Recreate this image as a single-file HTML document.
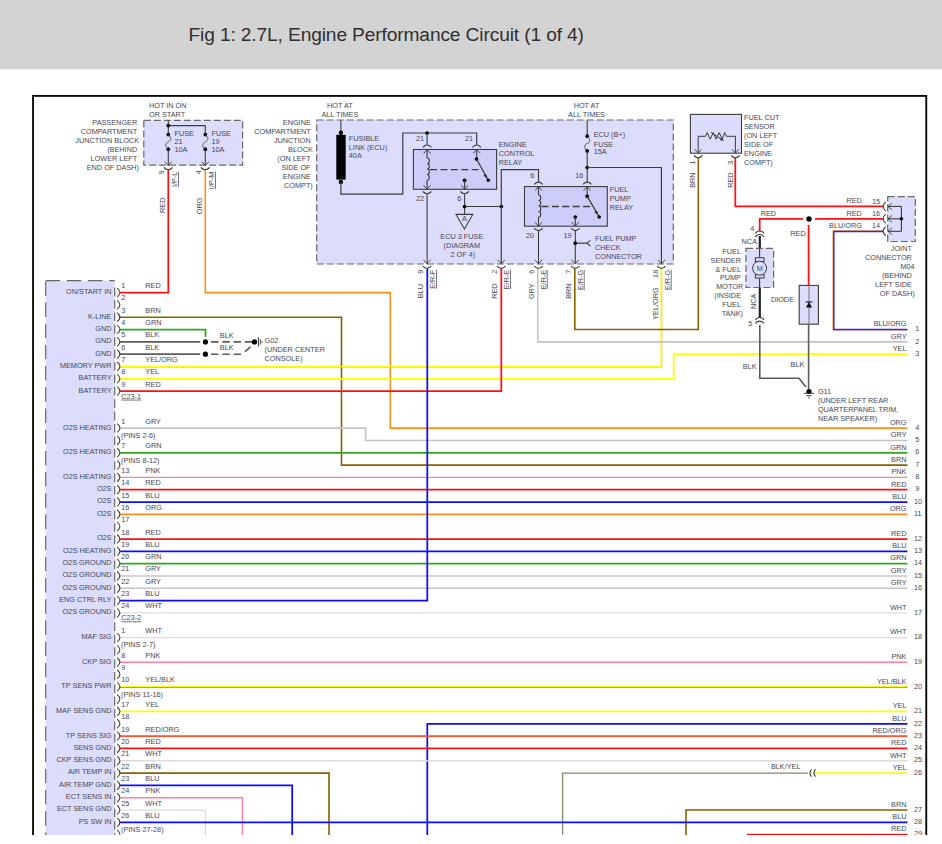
<!DOCTYPE html>
<html><head><meta charset="utf-8"><title>Fig 1: 2.7L, Engine Performance Circuit (1 of 4)</title>
<style>
html,body{margin:0;padding:0;background:#fff;}
body{width:942px;height:844px;overflow:hidden;position:relative;font-family:"Liberation Sans",sans-serif;}
#hdr{position:absolute;left:0;top:0;width:942px;height:69px;background:#d3d3d3;}
#ttl{position:absolute;left:188.5px;top:23.5px;font-size:19.2px;line-height:22px;color:#303030;white-space:nowrap;letter-spacing:-0.14px;}
#dia{position:absolute;left:0;top:0;width:942px;height:835px;overflow:hidden;}
svg text{font-family:"Liberation Sans",sans-serif;font-size:7.3px;fill:#474756;}
</style></head><body>
<div id="hdr"><div id="ttl">Fig 1: 2.7L, Engine Performance Circuit (1 of 4)</div></div>
<div id="dia"><svg width="942" height="835" viewBox="0 0 942 835" style="position:absolute;left:0;top:0">
<rect x="0" y="68" width="942" height="1.3" fill="#d3d3d3"/>
<rect x="33.05" y="95.9" width="893.2" height="800" fill="none" stroke="#0a0a0a" stroke-width="1.9"/>
<rect x="45.7" y="280.7" width="69.0" height="600" fill="#dcdcfd"/>
<path d="M45.7 281.3 L45.7 900 M45.7 280.7 L114.7 280.7" stroke="#686868" stroke-width="1.2" fill="none" stroke-dasharray="14.4 6.8"/>
<path d="M120 292.6 L168.3 292.6 L168.3 169.5" stroke="#ff1010" stroke-width="1.75" fill="none" />
<path d="M205.3 169.5 L205.3 292.6 L390.3 292.6 L390.3 428.12 L907.4 428.12" stroke="#ff8c1a" stroke-width="1.55" fill="none" />
<path d="M120 317.24 L341.5 317.24 L341.5 465.08 L907.4 465.08" stroke="#866200" stroke-width="1.6" fill="none" />
<path d="M120 366.82 L661.6 366.82 L661.6 268.2" stroke="#ffb400" stroke-width="1.35" fill="none" />
<path d="M120 366.42 L661.2 366.42 L661.2 268.2" stroke="#ffff00" stroke-width="1.25" fill="none" />
<path d="M120 378.84 L673.7 378.84 L673.7 354.2 L907.4 354.2" stroke="#ffff00" stroke-width="1.75" fill="none" />
<path d="M120 391.16 L501.3 391.16 L501.3 268.2" stroke="#ff1010" stroke-width="1.75" fill="none" />
<path d="M537.8 268.2 L537.8 341.88 L907.4 341.88" stroke="#c4c4c4" stroke-width="1.6" fill="none" />
<path d="M574.8 268.2 L574.8 329.56 L698.3 329.56 L698.3 157.6" stroke="#866200" stroke-width="1.6" fill="none" />
<path d="M120 428.12 L365.6 428.12 L365.6 440.44 L907.4 440.44" stroke="#c4c4c4" stroke-width="1.6" fill="none" />
<path d="M120 452.76 L907.4 452.76" stroke="#2fa81f" stroke-width="1.75" fill="none" />
<path d="M120 477.4 L907.4 477.4" stroke="#ff7f9c" stroke-width="1.35" fill="none" />
<path d="M120 489.72 L907.4 489.72" stroke="#ff1010" stroke-width="1.75" fill="none" />
<path d="M120 502.04 L907.4 502.04" stroke="#0c0cff" stroke-width="1.75" fill="none" />
<path d="M120 514.36 L907.4 514.36" stroke="#ff8c1a" stroke-width="1.55" fill="none" />
<path d="M120 539 L907.4 539" stroke="#ff1010" stroke-width="1.75" fill="none" />
<path d="M120 551.32 L907.4 551.32" stroke="#0c0cff" stroke-width="1.75" fill="none" />
<path d="M120 563.64 L907.4 563.64" stroke="#2fa81f" stroke-width="1.75" fill="none" />
<path d="M120 575.96 L907.4 575.96" stroke="#c4c4c4" stroke-width="1.6" fill="none" />
<path d="M120 588.28 L907.4 588.28" stroke="#c4c4c4" stroke-width="1.6" fill="none" />
<path d="M120 600.6 L427.3 600.6 L427.3 268.2" stroke="#0c0cff" stroke-width="1.75" fill="none" />
<path d="M120 612.92 L907.4 612.92" stroke="#dcdcdc" stroke-width="1.3" fill="none" />
<path d="M120 637.56 L907.4 637.56" stroke="#dcdcdc" stroke-width="1.3" fill="none" />
<path d="M120 662.2 L907.4 662.2" stroke="#ff7f9c" stroke-width="1.35" fill="none" />
<path d="M120 687.14 L907.4 687.14" stroke="#8a8a30" stroke-width="1.75" fill="none" />
<path d="M120 686.54 L907.4 686.54" stroke="#ffff00" stroke-width="1.3" fill="none" />
<path d="M120 711.48 L907.4 711.48" stroke="#ffff00" stroke-width="1.75" fill="none" />
<path d="M427.3 900 L427.3 723.8 L907.4 723.8" stroke="#0c0cff" stroke-width="1.75" fill="none" />
<path d="M120 736.12 L907.4 736.12" stroke="#ff5030" stroke-width="1.75" fill="none" />
<path d="M120 748.44 L907.4 748.44" stroke="#ff1010" stroke-width="1.75" fill="none" />
<path d="M120 760.76 L907.4 760.76" stroke="#dcdcdc" stroke-width="1.3" fill="none" />
<path d="M120 773.08 L329 773.08 L329 900" stroke="#866200" stroke-width="1.6" fill="none" />
<path d="M562.6 900 L562.6 773.08 L808 773.08" stroke="#85856a" stroke-width="1.3" fill="none" />
<path d="M120 785.4 L292.2 785.4 L292.2 900" stroke="#0c0cff" stroke-width="1.75" fill="none" />
<path d="M120 797.72 L242.4 797.72 L242.4 900" stroke="#ff7f9c" stroke-width="1.35" fill="none" />
<path d="M120 810.04 L205.4 810.04 L205.4 900" stroke="#dcdcdc" stroke-width="1.3" fill="none" />
<path d="M686 900 L686 810.04 L907.4 810.04" stroke="#866200" stroke-width="1.6" fill="none" />
<path d="M120 822.36 L907.4 822.36" stroke="#0c0cff" stroke-width="1.75" fill="none" />
<path d="M120 329.56 L205.5 329.56 L205.5 341.88" stroke="#2fa81f" stroke-width="1.75" fill="none" />
<path d="M120 341.88 L205.5 341.88" stroke="#5c5c5c" stroke-width="1.75" fill="none" />
<path d="M120 354.2 L205.5 354.2" stroke="#5c5c5c" stroke-width="1.75" fill="none" />
<path d="M211 341.88 L252 341.88" stroke="#5c5c5c" stroke-width="1.6" fill="none" stroke-dasharray="7.5 3.8"/>
<path d="M211 354.2 L242 354.2" stroke="#5c5c5c" stroke-width="1.6" fill="none" stroke-dasharray="7.5 3.8"/>
<path d="M245 351.6 L250.6 346.8" stroke="#5c5c5c" stroke-width="1.6" fill="none" />
<path d="M814 773.08 L907.4 773.08" stroke="#ffff00" stroke-width="1.75" fill="none" />
<path d="M811.5 769.48 Q808.3 773.08 811.5 776.6800000000001 M815.5 769.48 Q812.3 773.08 815.5 776.6800000000001" stroke="#3c3c3c" stroke-width="1.1" fill="none"/>
<path d="M747 834.68 L907.4 834.68" stroke="#ff1010" stroke-width="1.75" fill="none" />
<path d="M735.3 157.6 L735.3 206.4 L883 206.4" stroke="#ff1010" stroke-width="1.75" fill="none" />
<path d="M759.7 231 L759.7 218.9 L883 218.9" stroke="#ff1010" stroke-width="1.75" fill="none" />
<path d="M808.6 218.8 L808.6 285" stroke="#ff1010" stroke-width="1.75" fill="none" />
<path d="M883 231 L833.2 231 L833.2 329.86 L907.4 329.86" stroke="#ff9a3a" stroke-width="1.5" fill="none" />
<path d="M883 231.4 L833.8 231.4 L833.8 329.46 L907.4 329.46" stroke="#2828f0" stroke-width="1.45" fill="none" />
<path d="M759.8 236 L759.8 318" stroke="#222" stroke-width="2.2" fill="none" />
<path d="M759.8 325 L759.8 378.3 L799 378.3 L806 387" stroke="#5c5c5c" stroke-width="1.6" fill="none" />
<path d="M808.6 324.6 L808.6 389" stroke="#5c5c5c" stroke-width="1.6" fill="none" />
<path d="M114.7 287.6 L114.7 900" stroke="#686868" stroke-width="1.2" fill="none" stroke-dasharray="8.6 3.8"/>
<path d="M117.2 288.1 Q122.6 292.5 117.2 296.9" stroke="#3c3c3c" stroke-width="1.1" fill="none"/>
<path d="M117.2 300.42 Q122.6 304.82 117.2 309.22" stroke="#3c3c3c" stroke-width="1.1" fill="none"/>
<path d="M117.2 312.74 Q122.6 317.14 117.2 321.54" stroke="#3c3c3c" stroke-width="1.1" fill="none"/>
<path d="M117.2 325.06 Q122.6 329.46 117.2 333.86" stroke="#3c3c3c" stroke-width="1.1" fill="none"/>
<path d="M117.2 337.38 Q122.6 341.78 117.2 346.18" stroke="#3c3c3c" stroke-width="1.1" fill="none"/>
<path d="M117.2 349.7 Q122.6 354.1 117.2 358.5" stroke="#3c3c3c" stroke-width="1.1" fill="none"/>
<path d="M117.2 362.02 Q122.6 366.42 117.2 370.82" stroke="#3c3c3c" stroke-width="1.1" fill="none"/>
<path d="M117.2 374.34 Q122.6 378.74 117.2 383.14" stroke="#3c3c3c" stroke-width="1.1" fill="none"/>
<path d="M117.2 386.66 Q122.6 391.06 117.2 395.46" stroke="#3c3c3c" stroke-width="1.1" fill="none"/>
<path d="M117.2 423.62 Q122.6 428.02 117.2 432.42" stroke="#3c3c3c" stroke-width="1.1" fill="none"/>
<path d="M117.2 435.94 Q122.6 440.34 117.2 444.74" stroke="#3c3c3c" stroke-width="1.1" fill="none"/>
<path d="M117.2 448.26 Q122.6 452.66 117.2 457.06" stroke="#3c3c3c" stroke-width="1.1" fill="none"/>
<path d="M117.2 460.58 Q122.6 464.98 117.2 469.38" stroke="#3c3c3c" stroke-width="1.1" fill="none"/>
<path d="M117.2 472.9 Q122.6 477.3 117.2 481.7" stroke="#3c3c3c" stroke-width="1.1" fill="none"/>
<path d="M117.2 485.22 Q122.6 489.62 117.2 494.02" stroke="#3c3c3c" stroke-width="1.1" fill="none"/>
<path d="M117.2 497.54 Q122.6 501.94 117.2 506.34" stroke="#3c3c3c" stroke-width="1.1" fill="none"/>
<path d="M117.2 509.86 Q122.6 514.26 117.2 518.66" stroke="#3c3c3c" stroke-width="1.1" fill="none"/>
<path d="M117.2 522.18 Q122.6 526.58 117.2 530.98" stroke="#3c3c3c" stroke-width="1.1" fill="none"/>
<path d="M117.2 534.5 Q122.6 538.9 117.2 543.3" stroke="#3c3c3c" stroke-width="1.1" fill="none"/>
<path d="M117.2 546.82 Q122.6 551.22 117.2 555.62" stroke="#3c3c3c" stroke-width="1.1" fill="none"/>
<path d="M117.2 559.14 Q122.6 563.54 117.2 567.94" stroke="#3c3c3c" stroke-width="1.1" fill="none"/>
<path d="M117.2 571.46 Q122.6 575.86 117.2 580.26" stroke="#3c3c3c" stroke-width="1.1" fill="none"/>
<path d="M117.2 583.78 Q122.6 588.18 117.2 592.58" stroke="#3c3c3c" stroke-width="1.1" fill="none"/>
<path d="M117.2 596.1 Q122.6 600.5 117.2 604.9" stroke="#3c3c3c" stroke-width="1.1" fill="none"/>
<path d="M117.2 608.42 Q122.6 612.82 117.2 617.22" stroke="#3c3c3c" stroke-width="1.1" fill="none"/>
<path d="M117.2 633.06 Q122.6 637.46 117.2 641.86" stroke="#3c3c3c" stroke-width="1.1" fill="none"/>
<path d="M117.2 645.38 Q122.6 649.78 117.2 654.18" stroke="#3c3c3c" stroke-width="1.1" fill="none"/>
<path d="M117.2 657.7 Q122.6 662.1 117.2 666.5" stroke="#3c3c3c" stroke-width="1.1" fill="none"/>
<path d="M117.2 670.02 Q122.6 674.42 117.2 678.82" stroke="#3c3c3c" stroke-width="1.1" fill="none"/>
<path d="M117.2 682.34 Q122.6 686.74 117.2 691.14" stroke="#3c3c3c" stroke-width="1.1" fill="none"/>
<path d="M117.2 694.66 Q122.6 699.06 117.2 703.46" stroke="#3c3c3c" stroke-width="1.1" fill="none"/>
<path d="M117.2 706.98 Q122.6 711.38 117.2 715.78" stroke="#3c3c3c" stroke-width="1.1" fill="none"/>
<path d="M117.2 719.3 Q122.6 723.7 117.2 728.1" stroke="#3c3c3c" stroke-width="1.1" fill="none"/>
<path d="M117.2 731.62 Q122.6 736.02 117.2 740.42" stroke="#3c3c3c" stroke-width="1.1" fill="none"/>
<path d="M117.2 743.94 Q122.6 748.34 117.2 752.74" stroke="#3c3c3c" stroke-width="1.1" fill="none"/>
<path d="M117.2 756.26 Q122.6 760.66 117.2 765.06" stroke="#3c3c3c" stroke-width="1.1" fill="none"/>
<path d="M117.2 768.58 Q122.6 772.98 117.2 777.38" stroke="#3c3c3c" stroke-width="1.1" fill="none"/>
<path d="M117.2 780.9 Q122.6 785.3 117.2 789.7" stroke="#3c3c3c" stroke-width="1.1" fill="none"/>
<path d="M117.2 793.22 Q122.6 797.62 117.2 802.02" stroke="#3c3c3c" stroke-width="1.1" fill="none"/>
<path d="M117.2 805.54 Q122.6 809.94 117.2 814.34" stroke="#3c3c3c" stroke-width="1.1" fill="none"/>
<path d="M117.2 817.86 Q122.6 822.26 117.2 826.66" stroke="#3c3c3c" stroke-width="1.1" fill="none"/>
<path d="M117.2 830.18 Q122.6 834.58 117.2 838.98" stroke="#3c3c3c" stroke-width="1.1" fill="none"/>
<path d="M117.2 842.5 Q122.6 846.9 117.2 851.3" stroke="#3c3c3c" stroke-width="1.1" fill="none"/>
<text x="111.5" y="294" text-anchor="end">ON/START IN</text>
<text x="111.5" y="318.64" text-anchor="end">K-LINE</text>
<text x="111.5" y="330.96" text-anchor="end">GND</text>
<text x="111.5" y="343.28" text-anchor="end">GND</text>
<text x="111.5" y="355.6" text-anchor="end">GND</text>
<text x="111.5" y="367.92" text-anchor="end">MEMORY PWR</text>
<text x="111.5" y="380.24" text-anchor="end">BATTERY</text>
<text x="111.5" y="392.56" text-anchor="end">BATTERY</text>
<text x="111.5" y="429.52" text-anchor="end">O2S HEATING</text>
<text x="111.5" y="454.16" text-anchor="end">O2S HEATING</text>
<text x="111.5" y="478.8" text-anchor="end">O2S HEATING</text>
<text x="111.5" y="491.12" text-anchor="end">O2S</text>
<text x="111.5" y="503.44" text-anchor="end">O2S</text>
<text x="111.5" y="515.76" text-anchor="end">O2S</text>
<text x="111.5" y="540.4" text-anchor="end">O2S</text>
<text x="111.5" y="552.72" text-anchor="end">O2S HEATING</text>
<text x="111.5" y="565.04" text-anchor="end">O2S GROUND</text>
<text x="111.5" y="577.36" text-anchor="end">O2S GROUND</text>
<text x="111.5" y="589.68" text-anchor="end">O2S GROUND</text>
<text x="111.5" y="602" text-anchor="end">ENG CTRL RLY</text>
<text x="111.5" y="614.32" text-anchor="end">O2S GROUND</text>
<text x="111.5" y="638.96" text-anchor="end">MAF SIG</text>
<text x="111.5" y="663.6" text-anchor="end">CKP SIG</text>
<text x="111.5" y="688.24" text-anchor="end">TP SENS PWR</text>
<text x="111.5" y="712.88" text-anchor="end">MAF SENS GND</text>
<text x="111.5" y="737.52" text-anchor="end">TP SENS SIG</text>
<text x="111.5" y="749.84" text-anchor="end">SENS GND</text>
<text x="111.5" y="762.16" text-anchor="end">CKP SENS GND</text>
<text x="111.5" y="774.48" text-anchor="end">AIR TEMP IN</text>
<text x="111.5" y="786.8" text-anchor="end">AIR TEMP GND</text>
<text x="111.5" y="799.12" text-anchor="end">ECT SENS IN</text>
<text x="111.5" y="811.44" text-anchor="end">ECT SENS GND</text>
<text x="111.5" y="823.76" text-anchor="end">PS SW IN</text>
<text x="121.3" y="288.1">1</text>
<text x="145.3" y="288.1">RED</text>
<text x="121.3" y="300.42">2</text>
<text x="121.3" y="312.74">3</text>
<text x="145.3" y="312.74">BRN</text>
<text x="121.3" y="325.06">4</text>
<text x="145.3" y="325.06">GRN</text>
<text x="121.3" y="337.38">5</text>
<text x="145.3" y="337.38">BLK</text>
<text x="121.3" y="349.7">6</text>
<text x="145.3" y="349.7">BLK</text>
<text x="121.3" y="362.02">7</text>
<text x="145.3" y="362.02">YEL/ORG</text>
<text x="121.3" y="374.34">8</text>
<text x="145.3" y="374.34">YEL</text>
<text x="121.3" y="386.66">9</text>
<text x="145.3" y="386.66">RED</text>
<text x="121.3" y="423.62">1</text>
<text x="145.3" y="423.62">GRY</text>
<text x="121.3" y="448.26">7</text>
<text x="145.3" y="448.26">GRN</text>
<text x="121.3" y="472.9">13</text>
<text x="145.3" y="472.9">PNK</text>
<text x="121.3" y="485.22">14</text>
<text x="145.3" y="485.22">RED</text>
<text x="121.3" y="497.54">15</text>
<text x="145.3" y="497.54">BLU</text>
<text x="121.3" y="509.86">16</text>
<text x="145.3" y="509.86">ORG</text>
<text x="121.3" y="522.18">17</text>
<text x="121.3" y="534.5">18</text>
<text x="145.3" y="534.5">RED</text>
<text x="121.3" y="546.82">19</text>
<text x="145.3" y="546.82">BLU</text>
<text x="121.3" y="559.14">20</text>
<text x="145.3" y="559.14">GRN</text>
<text x="121.3" y="571.46">21</text>
<text x="145.3" y="571.46">GRY</text>
<text x="121.3" y="583.78">22</text>
<text x="145.3" y="583.78">GRY</text>
<text x="121.3" y="596.1">23</text>
<text x="145.3" y="596.1">BLU</text>
<text x="121.3" y="608.42">24</text>
<text x="145.3" y="608.42">WHT</text>
<text x="121.3" y="633.06">1</text>
<text x="145.3" y="633.06">WHT</text>
<text x="121.3" y="657.7">8</text>
<text x="145.3" y="657.7">PNK</text>
<text x="121.3" y="670.02">9</text>
<text x="121.3" y="682.34">10</text>
<text x="145.3" y="682.34">YEL/BLK</text>
<text x="121.3" y="706.98">17</text>
<text x="145.3" y="706.98">YEL</text>
<text x="121.3" y="719.3">18</text>
<text x="121.3" y="731.62">19</text>
<text x="145.3" y="731.62">RED/ORG</text>
<text x="121.3" y="743.94">20</text>
<text x="145.3" y="743.94">RED</text>
<text x="121.3" y="756.26">21</text>
<text x="145.3" y="756.26">WHT</text>
<text x="121.3" y="768.58">22</text>
<text x="145.3" y="768.58">BRN</text>
<text x="121.3" y="780.9">23</text>
<text x="145.3" y="780.9">BLU</text>
<text x="121.3" y="793.22">24</text>
<text x="145.3" y="793.22">PNK</text>
<text x="121.3" y="805.54">25</text>
<text x="145.3" y="805.54">WHT</text>
<text x="121.3" y="817.86">26</text>
<text x="145.3" y="817.86">BLU</text>
<text x="121" y="438.04">(PINS 2-6)</text>
<text x="121" y="462.68">(PINS 8-12)</text>
<text x="121" y="647.48">(PINS 2-7)</text>
<text x="121" y="696.76">(PINS 11-16)</text>
<text x="121" y="832.28">(PINS 27-28)</text>
<text x="121.3" y="398.68" text-decoration="underline">C23-1</text>
<text x="121.3" y="620.44" text-decoration="underline">C23-2</text>
<text x="906.5" y="326.36" text-anchor="end">BLU/ORG</text>
<text x="915.2" y="331.26">1</text>
<text x="906.5" y="338.68" text-anchor="end">GRY</text>
<text x="915.2" y="343.58">2</text>
<text x="906.5" y="351" text-anchor="end">YEL</text>
<text x="915.2" y="355.9">3</text>
<text x="906.5" y="424.92" text-anchor="end">ORG</text>
<text x="915.2" y="429.82">4</text>
<text x="906.5" y="437.24" text-anchor="end">GRY</text>
<text x="915.2" y="442.14">5</text>
<text x="906.5" y="449.56" text-anchor="end">GRN</text>
<text x="915.2" y="454.46">6</text>
<text x="906.5" y="461.88" text-anchor="end">BRN</text>
<text x="915.2" y="466.78">7</text>
<text x="906.5" y="474.2" text-anchor="end">PNK</text>
<text x="915.2" y="479.1">8</text>
<text x="906.5" y="486.52" text-anchor="end">RED</text>
<text x="915.2" y="491.42">9</text>
<text x="906.5" y="498.84" text-anchor="end">BLU</text>
<text x="914" y="503.74">10</text>
<text x="906.5" y="511.16" text-anchor="end">ORG</text>
<text x="914" y="516.06">11</text>
<text x="906.5" y="535.8" text-anchor="end">RED</text>
<text x="914" y="540.7">12</text>
<text x="906.5" y="548.12" text-anchor="end">BLU</text>
<text x="914" y="553.02">13</text>
<text x="906.5" y="560.44" text-anchor="end">GRN</text>
<text x="914" y="565.34">14</text>
<text x="906.5" y="572.76" text-anchor="end">GRY</text>
<text x="914" y="577.66">15</text>
<text x="906.5" y="585.08" text-anchor="end">GRY</text>
<text x="914" y="589.98">16</text>
<text x="906.5" y="609.72" text-anchor="end">WHT</text>
<text x="914" y="614.62">17</text>
<text x="906.5" y="634.36" text-anchor="end">WHT</text>
<text x="914" y="639.26">18</text>
<text x="906.5" y="659" text-anchor="end">PNK</text>
<text x="914" y="663.9">19</text>
<text x="906.5" y="683.64" text-anchor="end">YEL/BLK</text>
<text x="914" y="688.54">20</text>
<text x="906.5" y="708.28" text-anchor="end">YEL</text>
<text x="914" y="713.18">21</text>
<text x="906.5" y="720.6" text-anchor="end">BLU</text>
<text x="914" y="725.5">22</text>
<text x="906.5" y="732.92" text-anchor="end">RED/ORG</text>
<text x="914" y="737.82">23</text>
<text x="906.5" y="745.24" text-anchor="end">RED</text>
<text x="914" y="750.14">24</text>
<text x="906.5" y="757.56" text-anchor="end">WHT</text>
<text x="914" y="762.46">25</text>
<text x="906.5" y="769.88" text-anchor="end">YEL</text>
<text x="914" y="774.78">26</text>
<text x="906.5" y="806.84" text-anchor="end">BRN</text>
<text x="914" y="811.74">27</text>
<text x="906.5" y="819.16" text-anchor="end">BLU</text>
<text x="914" y="824.06">28</text>
<text x="906.5" y="831.48" text-anchor="end">RED</text>
<text x="914" y="836.38">29</text>
<text x="800.5" y="769.28" text-anchor="end">BLK/YEL</text>
<rect x="143.8" y="120.4" width="98.8" height="44.8" fill="#dcdcfd" stroke="#686868" stroke-width="1.2" stroke-dasharray="7 3"/>
<text x="149" y="108">HOT IN ON</text>
<text x="149" y="116.7">OR START</text>
<text x="137.2" y="124.9" text-anchor="end">PASSENGER</text>
<text x="137.2" y="133.86" text-anchor="end">COMPARTMENT</text>
<text x="139" y="142.82" text-anchor="end">JUNCTION BLOCK</text>
<text x="137.2" y="151.78" text-anchor="end">(BEHIND</text>
<text x="137.2" y="160.74" text-anchor="end">LOWER LEFT</text>
<text x="139" y="169.7" text-anchor="end">END OF DASH)</text>
<line x1="168.3" y1="120.4" x2="168.3" y2="134.6" stroke="#3c3c3c" stroke-width="1.1" />
<line x1="168.3" y1="149.2" x2="168.3" y2="165" stroke="#3c3c3c" stroke-width="1.1" />
<line x1="168.3" y1="125.6" x2="205.3" y2="125.6" stroke="#3c3c3c" stroke-width="1.1" />
<line x1="205.3" y1="125.6" x2="205.3" y2="134.6" stroke="#3c3c3c" stroke-width="1.1" />
<line x1="205.3" y1="149.2" x2="205.3" y2="165" stroke="#3c3c3c" stroke-width="1.1" />
<circle cx="168.3" cy="125.6" r="1.85" fill="#000"/>
<circle cx="168.3" cy="134.6" r="1.85" fill="#000"/>
<circle cx="168.3" cy="149.2" r="1.85" fill="#000"/>
<path d="M168.3 134.6 C171.70000000000002 137 171.70000000000002 140 168.3 141.9 C164.9 143.8 164.9 146.8 168.3 149.2" stroke="#555" stroke-width="1.0" fill="none"/>
<path d="M164.8 161.6 L168.3 165.6 L171.8 161.6" stroke="#3c3c3c" stroke-width="0.9" fill="none"/>
<path d="M164 167.5 Q168.3 171.9 172.6 167.5" stroke="#3c3c3c" stroke-width="1.1" fill="none"/>
<circle cx="205.3" cy="134.6" r="1.85" fill="#000"/>
<circle cx="205.3" cy="149.2" r="1.85" fill="#000"/>
<path d="M205.3 134.6 C208.70000000000002 137 208.70000000000002 140 205.3 141.9 C201.9 143.8 201.9 146.8 205.3 149.2" stroke="#555" stroke-width="1.0" fill="none"/>
<path d="M201.8 161.6 L205.3 165.6 L208.8 161.6" stroke="#3c3c3c" stroke-width="0.9" fill="none"/>
<path d="M201 167.5 Q205.3 171.9 209.6 167.5" stroke="#3c3c3c" stroke-width="1.1" fill="none"/>
<text x="174.5" y="135.6">FUSE</text>
<text x="174.5" y="143.6">21</text>
<text x="174.5" y="151.6">10A</text>
<text x="211.5" y="135.6">FUSE</text>
<text x="211.5" y="143.6">19</text>
<text x="211.5" y="151.6">10A</text>
<text transform="translate(164.2 170.5) rotate(-90)" text-anchor="end">9</text>
<text transform="translate(201.2 170.5) rotate(-90)" text-anchor="end">4</text>
<text transform="translate(177.2 171.7) rotate(-90)" text-anchor="end" text-decoration="underline">I/P-L</text>
<text transform="translate(214.2 171.7) rotate(-90)" text-anchor="end" text-decoration="underline">I/P-M</text>
<text transform="translate(164.8 197.5) rotate(-90)" text-anchor="end">RED</text>
<text transform="translate(201.8 197.5) rotate(-90)" text-anchor="end">ORG</text>
<rect x="316.7" y="120" width="356.6" height="144" fill="#dcdcfd" stroke="#686868" stroke-width="1.2" stroke-dasharray="7 3"/>
<text x="339.9" y="107.8" text-anchor="middle">HOT AT</text>
<text x="339.9" y="116.8" text-anchor="middle">ALL TIMES</text>
<text x="310.8" y="124.9" text-anchor="end">ENGINE</text>
<text x="310.8" y="133.91" text-anchor="end">COMPARTMENT</text>
<text x="310.8" y="142.92" text-anchor="end">JUNCTION</text>
<text x="312.8" y="151.93" text-anchor="end">BLOCK</text>
<text x="310.6" y="160.94" text-anchor="end">(ON LEFT</text>
<text x="310.6" y="169.95" text-anchor="end">SIDE OF</text>
<text x="310.8" y="178.96" text-anchor="end">ENGINE</text>
<text x="312.8" y="187.97" text-anchor="end">COMPT)</text>
<line x1="340.9" y1="120.6" x2="340.9" y2="134" stroke="#3c3c3c" stroke-width="1.1" />
<rect x="336.3" y="134.8" width="9.4" height="44.8" fill="#000"/>
<circle cx="340.9" cy="132.8" r="2.2" fill="#000"/>
<circle cx="340.9" cy="181.9" r="2.2" fill="#000"/>
<path d="M340.9 182 L340.9 194.1 L402.8 194.1 L402.8 133 L476.7 133 L476.7 144.8" stroke="#3c3c3c" stroke-width="1.2" fill="none" />
<circle cx="427.1" cy="133" r="1.85" fill="#000"/>
<line x1="427.1" y1="133" x2="427.1" y2="144.8" stroke="#3c3c3c" stroke-width="1.1" />
<text x="348.8" y="140.8">FUSIBLE</text>
<text x="348.8" y="149.6">LINK (ECU)</text>
<text x="348.8" y="158.4">40A</text>
<rect x="413.4" y="149.5" width="83.2" height="39.8" fill="#cdcdf9" stroke="#3c3c3c" stroke-width="1.1"/>
<path d="M422.8 147.3 Q427.1 142.7 431.4 147.3" stroke="#3c3c3c" stroke-width="1.1" fill="none"/>
<path d="M472.4 147.3 Q476.7 142.7 481 147.3" stroke="#3c3c3c" stroke-width="1.1" fill="none"/>
<path d="M423.6 153.6 L427.1 149.6 L430.6 153.6" stroke="#3c3c3c" stroke-width="0.9" fill="none"/>
<path d="M473.2 153.6 L476.7 149.6 L480.2 153.6" stroke="#3c3c3c" stroke-width="0.9" fill="none"/>
<line x1="427.1" y1="149.6" x2="427.1" y2="158" stroke="#3c3c3c" stroke-width="1.1" />
<path d="M427.1 158 C430.1 158 430.1 163.5 427.1 163.5 C430.1 163.5 430.1 169 427.1 169 C430.1 169 430.1 174.5 427.1 174.5 C430.1 174.5 430.1 180 427.1 180" stroke="#3c3c3c" stroke-width="1.1" fill="none"/>
<line x1="427.1" y1="180" x2="427.1" y2="189" stroke="#3c3c3c" stroke-width="1.1" />
<path d="M423.6 185.2 L427.1 189.2 L430.6 185.2" stroke="#3c3c3c" stroke-width="0.9" fill="none"/>
<path d="M422.8 191.5 Q427.1 195.9 431.4 191.5" stroke="#3c3c3c" stroke-width="1.1" fill="none"/>
<line x1="476.7" y1="149.6" x2="476.7" y2="159" stroke="#3c3c3c" stroke-width="1.1" />
<circle cx="476.5" cy="159" r="1.85" fill="#000"/>
<line x1="476.5" y1="159" x2="488.3" y2="180.3" stroke="#3c3c3c" stroke-width="1.3" />
<circle cx="488.3" cy="180.3" r="1.8" fill="#000"/>
<path d="M487.2 178.4 L483.4 175.4 L486.0 173.9 Z" fill="#222"/>
<line x1="430" y1="169.6" x2="480.6" y2="169.6" stroke="#3c3c3c" stroke-width="1.3" stroke-dasharray="7 3.4"/>
<circle cx="464.6" cy="180.3" r="1.85" fill="#000"/>
<line x1="464.6" y1="180.3" x2="464.6" y2="189" stroke="#3c3c3c" stroke-width="1.1" />
<path d="M461.1 185.2 L464.6 189.2 L468.1 185.2" stroke="#3c3c3c" stroke-width="0.9" fill="none"/>
<path d="M460.3 191.5 Q464.6 195.9 468.9 191.5" stroke="#3c3c3c" stroke-width="1.1" fill="none"/>
<line x1="427.1" y1="194.2" x2="427.1" y2="263.5" stroke="#3c3c3c" stroke-width="1.1" />
<path d="M423.5 259.8 L427.1 263.8 L430.7 259.8" stroke="#3c3c3c" stroke-width="0.9" fill="none"/>
<path d="M422.8 266.1 Q427.1 270.5 431.4 266.1" stroke="#3c3c3c" stroke-width="1.1" fill="none"/>
<line x1="464.6" y1="194.2" x2="464.6" y2="214.4" stroke="#3c3c3c" stroke-width="1.1" />
<circle cx="464.6" cy="206.5" r="1.85" fill="#000"/>
<line x1="464.6" y1="206.5" x2="501.3" y2="206.5" stroke="#3c3c3c" stroke-width="1.1" />
<circle cx="501.3" cy="206.5" r="1.85" fill="#000"/>
<path d="M456 214.4 L472.8 214.4 L464.4 229 Z" stroke="#3c3c3c" stroke-width="1.1" fill="none"/>
<text x="464.5" y="221.3" text-anchor="middle" font-size="6.6">A</text>
<text x="461.8" y="238.9" text-anchor="middle">ECU 3 FUSE</text>
<text x="461.8" y="247.9" text-anchor="middle">(DIAGRAM</text>
<text x="462.8" y="256.9" text-anchor="middle">2 OF 4)</text>
<text x="424" y="141.3" text-anchor="end">21</text>
<text x="473.2" y="141.3" text-anchor="end">21</text>
<text x="424" y="201" text-anchor="end">22</text>
<text x="461.3" y="201" text-anchor="end">6</text>
<text x="498.7" y="147.3">ENGINE</text>
<text x="498.7" y="156.2">CONTROL</text>
<text x="498.7" y="165.1">RELAY</text>
<path d="M501.3 263.5 L501.3 169.6 L538.5 169.6 L538.5 181.9" stroke="#3c3c3c" stroke-width="1.2" fill="none" />
<path d="M497.7 259.8 L501.3 263.8 L504.9 259.8" stroke="#3c3c3c" stroke-width="0.9" fill="none"/>
<path d="M497 266.1 Q501.3 270.5 505.6 266.1" stroke="#3c3c3c" stroke-width="1.1" fill="none"/>
<rect x="524.5" y="186.6" width="82.8" height="39.6" fill="#cdcdf9" stroke="#3c3c3c" stroke-width="1.1"/>
<path d="M534.2 184.4 Q538.5 179.8 542.8 184.4" stroke="#3c3c3c" stroke-width="1.1" fill="none"/>
<path d="M582.9 184.4 Q587.2 179.8 591.5 184.4" stroke="#3c3c3c" stroke-width="1.1" fill="none"/>
<path d="M535 190.7 L538.5 186.7 L542 190.7" stroke="#3c3c3c" stroke-width="0.9" fill="none"/>
<path d="M583.7 190.7 L587.2 186.7 L590.7 190.7" stroke="#3c3c3c" stroke-width="0.9" fill="none"/>
<line x1="538.5" y1="186.7" x2="538.5" y2="195" stroke="#3c3c3c" stroke-width="1.1" />
<path d="M538.5 195 C541.5 195 541.5 200.5 538.5 200.5 C541.5 200.5 541.5 206 538.5 206 C541.5 206 541.5 211.5 538.5 211.5 C541.5 211.5 541.5 217 538.5 217" stroke="#3c3c3c" stroke-width="1.1" fill="none"/>
<line x1="538.5" y1="217" x2="538.5" y2="226" stroke="#3c3c3c" stroke-width="1.1" />
<path d="M535 222.2 L538.5 226.2 L542 222.2" stroke="#3c3c3c" stroke-width="0.9" fill="none"/>
<path d="M534.2 228.4 Q538.5 232.8 542.8 228.4" stroke="#3c3c3c" stroke-width="1.1" fill="none"/>
<line x1="587.2" y1="186.7" x2="587.2" y2="196.3" stroke="#3c3c3c" stroke-width="1.1" />
<circle cx="587.2" cy="196.3" r="1.85" fill="#000"/>
<line x1="587.2" y1="196.3" x2="599.2" y2="217" stroke="#3c3c3c" stroke-width="1.3" />
<circle cx="599.2" cy="217" r="1.8" fill="#000"/>
<path d="M598.1 215.1 L594.3 212.1 L596.9 210.6 Z" fill="#222"/>
<line x1="541.5" y1="206.5" x2="592.3" y2="206.5" stroke="#3c3c3c" stroke-width="1.3" stroke-dasharray="7 3.4"/>
<circle cx="575.3" cy="217" r="1.85" fill="#000"/>
<line x1="575.3" y1="217" x2="575.3" y2="226" stroke="#3c3c3c" stroke-width="1.1" />
<path d="M571.8 222.2 L575.3 226.2 L578.8 222.2" stroke="#3c3c3c" stroke-width="0.9" fill="none"/>
<path d="M571 228.4 Q575.3 232.8 579.6 228.4" stroke="#3c3c3c" stroke-width="1.1" fill="none"/>
<line x1="538.5" y1="231.1" x2="538.5" y2="263.5" stroke="#3c3c3c" stroke-width="1.1" />
<path d="M534.9 259.8 L538.5 263.8 L542.1 259.8" stroke="#3c3c3c" stroke-width="0.9" fill="none"/>
<path d="M534.2 266.1 Q538.5 270.5 542.8 266.1" stroke="#3c3c3c" stroke-width="1.1" fill="none"/>
<line x1="575.3" y1="231.1" x2="575.3" y2="263.5" stroke="#3c3c3c" stroke-width="1.1" />
<path d="M571.7 259.8 L575.3 263.8 L578.9 259.8" stroke="#3c3c3c" stroke-width="0.9" fill="none"/>
<path d="M571 266.1 Q575.3 270.5 579.6 266.1" stroke="#3c3c3c" stroke-width="1.1" fill="none"/>
<circle cx="575.3" cy="243.2" r="1.85" fill="#000"/>
<path d="M575.3 243.2 L587 243.2" stroke="#3c3c3c" stroke-width="1.2" fill="none" />
<path d="M590.4 240.4 L587 243.2 L590.4 246.2" stroke="#3c3c3c" stroke-width="1.1" fill="none" />
<line x1="587.2" y1="120.6" x2="587.2" y2="136.2" stroke="#3c3c3c" stroke-width="1.1" />
<circle cx="587.2" cy="136.2" r="1.85" fill="#000"/>
<path d="M587.2 136.2 C590.6 138.7 590.6 142.55 587.2 143.55 C583.8000000000001 144.55 583.8000000000001 148.4 587.2 150.9" stroke="#555" stroke-width="1.0" fill="none"/>
<circle cx="587.2" cy="150.9" r="1.85" fill="#000"/>
<line x1="587.2" y1="150.9" x2="587.2" y2="181.9" stroke="#3c3c3c" stroke-width="1.1" />
<circle cx="587.2" cy="167.5" r="1.85" fill="#000"/>
<path d="M587.2 167.5 L661.4 167.5 L661.4 263.5" stroke="#3c3c3c" stroke-width="1.2" fill="none" />
<path d="M657.8 259.8 L661.4 263.8 L665 259.8" stroke="#3c3c3c" stroke-width="0.9" fill="none"/>
<path d="M657.1 266.1 Q661.4 270.5 665.7 266.1" stroke="#3c3c3c" stroke-width="1.1" fill="none"/>
<text x="586.5" y="107.8" text-anchor="middle">HOT AT</text>
<text x="586.5" y="116.8" text-anchor="middle">ALL TIMES</text>
<text x="593.7" y="137.3">ECU (B+)</text>
<text x="593.7" y="147">FUSE</text>
<text x="593.7" y="154.2">15A</text>
<text x="534.2" y="177.7" text-anchor="end">6</text>
<text x="583.4" y="177.7" text-anchor="end">16</text>
<text x="534.2" y="237.7" text-anchor="end">20</text>
<text x="571.6" y="237.7" text-anchor="end">19</text>
<text x="609.7" y="192.3">FUEL</text>
<text x="609.7" y="201.2">PUMP</text>
<text x="609.7" y="210.1">RELAY</text>
<text x="595" y="241.2">FUEL PUMP</text>
<text x="595" y="250.3">CHECK</text>
<text x="595" y="259.1">CONNECTOR</text>
<text transform="translate(423.4 269.8) rotate(-90)" text-anchor="end">9</text>
<text transform="translate(423.4 284) rotate(-90)" text-anchor="end">BLU</text>
<text transform="translate(435.3 269.8) rotate(-90)" text-anchor="end" text-decoration="underline">E/R-F</text>
<text transform="translate(497.4 269.8) rotate(-90)" text-anchor="end">2</text>
<text transform="translate(497.4 283.4) rotate(-90)" text-anchor="end">RED</text>
<text transform="translate(509.3 269.8) rotate(-90)" text-anchor="end" text-decoration="underline">E/R-E</text>
<text transform="translate(533.9 269.8) rotate(-90)" text-anchor="end">6</text>
<text transform="translate(533.9 283.4) rotate(-90)" text-anchor="end">GRY</text>
<text transform="translate(545.8 269.8) rotate(-90)" text-anchor="end" text-decoration="underline">E/R-E</text>
<text transform="translate(570.9 269.8) rotate(-90)" text-anchor="end">7</text>
<text transform="translate(570.9 283.4) rotate(-90)" text-anchor="end">BRN</text>
<text transform="translate(582.8 269.8) rotate(-90)" text-anchor="end" text-decoration="underline">E/R-G</text>
<text transform="translate(657.9 269.8) rotate(-90)" text-anchor="end">18</text>
<text transform="translate(657.9 287.3) rotate(-90)" text-anchor="end">YEL/ORG</text>
<text transform="translate(669.8 269.8) rotate(-90)" text-anchor="end" text-decoration="underline">E/R-G</text>
<rect x="690.4" y="114.4" width="51.1" height="38.8" fill="#dcdcfd" stroke="#3c3c3c" stroke-width="1.1"/>
<path d="M698.2 152.6 L698.2 136.3 L705.5 136.3 L707.2 132.6 L710.2 139.2 L713.2 132.6 L716.2 139.2 L719.2 132.6 L722.2 139.2 L724.8 132.6 L726.5 136.3 L735.4 136.3 L735.4 152.6" stroke="#3c3c3c" stroke-width="1.0" fill="none" />
<line x1="711" y1="132.2" x2="723.6" y2="140.8" stroke="#3c3c3c" stroke-width="1.0" />
<path d="M723.6 140.8 L719.8 140.3 L721.6 137.6 Z" fill="#3c3c3c"/>
<path d="M694.8 149.2 L698.2 153.2 L701.6 149.2" stroke="#3c3c3c" stroke-width="0.9" fill="none"/>
<path d="M732 149.2 L735.4 153.2 L738.8 149.2" stroke="#3c3c3c" stroke-width="0.9" fill="none"/>
<path d="M693.9 155.5 Q698.2 159.9 702.5 155.5" stroke="#3c3c3c" stroke-width="1.1" fill="none"/>
<path d="M731.1 155.5 Q735.4 159.9 739.7 155.5" stroke="#3c3c3c" stroke-width="1.1" fill="none"/>
<text x="744" y="120">FUEL CUT</text>
<text x="744" y="129">SENSOR</text>
<text x="744" y="138">(ON LEFT</text>
<text x="744" y="147">SIDE OF</text>
<text x="744" y="156">ENGINE</text>
<text x="744" y="165">COMPT)</text>
<text transform="translate(695.3 160.7) rotate(-90)" text-anchor="end">1</text>
<text transform="translate(732.5 160.7) rotate(-90)" text-anchor="end">3</text>
<text transform="translate(695.3 172.4) rotate(-90)" text-anchor="end">BRN</text>
<text transform="translate(732.5 172.4) rotate(-90)" text-anchor="end">RED</text>
<rect x="887.7" y="196.6" width="27.6" height="44.9" fill="#dcdcfd" stroke="#686868" stroke-width="1.2" stroke-dasharray="7 3"/>
<path d="M885.7 201.8 Q880.6 206.4 885.7 211.0" stroke="#3c3c3c" stroke-width="1.1" fill="none"/>
<path d="M892 203 L888 206.4 L892 209.8" stroke="#3c3c3c" stroke-width="0.9" fill="none"/>
<line x1="888" y1="206.4" x2="901.4" y2="206.4" stroke="#3c3c3c" stroke-width="1.1" />
<path d="M885.7 214.20000000000002 Q880.6 218.8 885.7 223.4" stroke="#3c3c3c" stroke-width="1.1" fill="none"/>
<path d="M892 215.4 L888 218.8 L892 222.2" stroke="#3c3c3c" stroke-width="0.9" fill="none"/>
<line x1="888" y1="218.8" x2="901.4" y2="218.8" stroke="#3c3c3c" stroke-width="1.1" />
<path d="M885.7 226.70000000000002 Q880.6 231.3 885.7 235.9" stroke="#3c3c3c" stroke-width="1.1" fill="none"/>
<path d="M892 227.9 L888 231.3 L892 234.7" stroke="#3c3c3c" stroke-width="0.9" fill="none"/>
<line x1="888" y1="231.3" x2="901.4" y2="231.3" stroke="#3c3c3c" stroke-width="1.1" />
<line x1="901.4" y1="206.4" x2="901.4" y2="231.3" stroke="#3c3c3c" stroke-width="1.1" />
<circle cx="901.4" cy="218.8" r="1.8" fill="#000"/>
<text x="861.9" y="202.7" text-anchor="end">RED</text>
<text x="861.9" y="215.9" text-anchor="end">RED</text>
<text x="861.9" y="227.6" text-anchor="end">BLU/ORG</text>
<text x="880" y="203.5" text-anchor="end">15</text>
<text x="880" y="216" text-anchor="end">16</text>
<text x="880" y="228.3" text-anchor="end">14</text>
<text x="911.9" y="250.8" text-anchor="end">JOINT</text>
<text x="911.9" y="260" text-anchor="end">CONNECTOR</text>
<text x="914.6" y="268.7" text-anchor="end">M04</text>
<text x="911.9" y="278" text-anchor="end">(BEHIND</text>
<text x="911.9" y="287" text-anchor="end">LEFT SIDE</text>
<text x="914.6" y="295.8" text-anchor="end">OF DASH)</text>
<circle cx="809" cy="219" r="6" fill="#fff"/>
<circle cx="809" cy="219" r="2.7" fill="#000"/>
<text x="760.7" y="215.8">RED</text>
<text x="790.3" y="235.6">RED</text>
<rect x="745.9" y="248.4" width="27.7" height="39.1" fill="#dcdcfd" stroke="#686868" stroke-width="1.2" stroke-dasharray="7 3"/>
<line x1="759.6" y1="248.4" x2="759.6" y2="258" stroke="#333" stroke-width="1.1" />
<line x1="759.6" y1="278" x2="759.6" y2="287.5" stroke="#333" stroke-width="1.1" />
<rect x="755.4" y="257.8" width="8.6" height="3.8" fill="#dcdcfd" stroke="#3c3c3c" stroke-width="1"/>
<rect x="755.4" y="274.6" width="8.6" height="3.4" fill="#dcdcfd" stroke="#3c3c3c" stroke-width="1"/>
<circle cx="759.6" cy="268.2" r="7" fill="#dcdcfd" stroke="#3c3c3c" stroke-width="1"/>
<text x="759.7" y="270.6" text-anchor="middle" font-size="6.6">M</text>
<path d="M755.4000000000001 233.4 C757.1 230.1 762.3000000000001 230.1 764.0 233.4 M755.4000000000001 237.0 C757.1 233.70000000000002 762.3000000000001 233.70000000000002 764.0 237.0" stroke="#3c3c3c" stroke-width="1.1" fill="none"/>
<path d="M755.4000000000001 320.0 C757.1 316.7 762.3000000000001 316.7 764.0 320.0 M755.4000000000001 323.6 C757.1 320.3 762.3000000000001 320.3 764.0 323.6" stroke="#3c3c3c" stroke-width="1.1" fill="none"/>
<text x="754.4" y="230.8" text-anchor="end">4</text>
<text x="752.2" y="326.2" text-anchor="end">5</text>
<text x="757" y="243.8" text-anchor="end">NCA</text>
<text transform="translate(756.4 309) rotate(-90)">NCA</text>
<text x="741" y="253.9" text-anchor="end">FUEL</text>
<text x="741" y="262.7" text-anchor="end">SENDER</text>
<text x="741" y="271.6" text-anchor="end">&amp; FUEL</text>
<text x="741" y="279.8" text-anchor="end">PUMP</text>
<text x="743.2" y="288.7" text-anchor="end">MOTOR</text>
<text x="741" y="297.8" text-anchor="end">(INSIDE</text>
<text x="741" y="306.9" text-anchor="end">FUEL</text>
<text x="743" y="315.8" text-anchor="end">TANK)</text>
<rect x="799.2" y="285.4" width="19.2" height="38.8" fill="#dcdcfd" stroke="#3c3c3c" stroke-width="1.1"/>
<line x1="809" y1="285.4" x2="809" y2="324.2" stroke="#777" stroke-width="1.0" />
<path d="M805.9 307.6 L812.1 307.6 L809 302 Z" fill="#111"/>
<line x1="805.7" y1="302" x2="812.3" y2="302" stroke="#111" stroke-width="1.1" />
<text x="794" y="301.7" text-anchor="end">DIODE</text>
<text x="756.6" y="369" text-anchor="end">BLK</text>
<text x="804.4" y="366.8" text-anchor="end">BLK</text>
<circle cx="809" cy="391.5" r="2.6" fill="#000"/>
<line x1="804" y1="393.3" x2="814" y2="393.3" stroke="#3c3c3c" stroke-width="1.0" />
<line x1="806.4" y1="395.7" x2="811.6" y2="395.7" stroke="#3c3c3c" stroke-width="1.0" />
<line x1="808.2" y1="397.8" x2="809.8" y2="397.8" stroke="#3c3c3c" stroke-width="1.0" />
<text x="817.9" y="394">G11</text>
<text x="817.9" y="403">(UNDER LEFT REAR</text>
<text x="817.9" y="412">QUARTERPANEL TRIM,</text>
<text x="817.9" y="421">NEAR SPEAKER)</text>
<circle cx="205.4" cy="341.88" r="5.2" fill="#fff"/>
<circle cx="205.4" cy="341.88" r="2.6" fill="#000"/>
<circle cx="205.4" cy="354.2" r="5.2" fill="#fff"/>
<circle cx="205.4" cy="354.2" r="2.6" fill="#000"/>
<circle cx="254.5" cy="341.88" r="2.6" fill="#000"/>
<line x1="258.4" y1="337.28" x2="258.4" y2="346.48" stroke="#222" stroke-width="0.9" />
<line x1="260.3" y1="339.08" x2="260.3" y2="344.68" stroke="#222" stroke-width="0.8" />
<line x1="262" y1="340.98" x2="262" y2="342.78" stroke="#222" stroke-width="0.8" />
<text x="219.8" y="337.5">BLK</text>
<text x="219.8" y="349.8">BLK</text>
<text x="264.5" y="342.8">G02</text>
<text x="264.5" y="351.7">(UNDER CENTER</text>
<text x="264.5" y="360.6">CONSOLE)</text>
</svg></div>
</body></html>
